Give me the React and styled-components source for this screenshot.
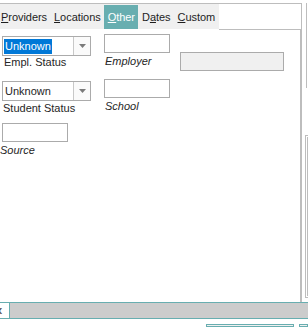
import React from "react";
import styled, { createGlobalStyle } from "styled-components";

const Global = createGlobalStyle`
  html, body { margin: 0; padding: 0; background: #ffffff; }
  body { font-family: "Liberation Sans", Arial, sans-serif; font-size: 11px; color: #1e1e1e; }
  * { box-sizing: border-box; }
`;

const GRAY = "#bdbdbd";
const TEAL = "#68aeb0";

const Page = styled.div`
  width: 308px;
  height: 327px;
  overflow: hidden;
  display: flex;
  flex-direction: column;
  background: #fff;
`;

const Upper = styled.div`
  margin-top: 3px;
  height: 299px;
  display: flex;
`;

const Tabs = styled.div`
  width: 302px;
  border-top: 1px solid ${GRAY};
  border-right: 1px solid ${GRAY};
  display: flex;
  flex-direction: column;
`;

const TabHeader = styled.div`
  height: 26px;
  display: flex;
  align-items: flex-start;
`;

const TabStrip = styled.div`
  margin-left: -2.5px;
  height: 25px;
  padding-top: 1px;
  background: #f0f0f0;
  display: flex;
`;

const Tab = styled.div`
  height: 24px;
  line-height: 24px;
  padding: 0 3.5px;
  letter-spacing: -0.05px;
  white-space: nowrap;
  background: ${(p) => (p.$active ? TEAL : "transparent")};
  color: ${(p) => (p.$active ? "#ffffff" : "#1e1e1e")};
`;

const HeaderFill = styled.div`
  flex: 1;
  height: 26px;
  border-bottom: 1px solid ${GRAY};
`;

const Panel = styled.div`
  width: 301px;
  flex: 1;
  border-right: 1px solid ${GRAY};
  display: flex;
  flex-direction: column;
`;

const Row = styled.div`
  height: ${(p) => p.$h}px;
  display: flex;
  align-items: flex-start;
`;

const Field = styled.div`
  margin-left: ${(p) => p.$ml || 0}px;
  margin-top: ${(p) => p.$mt || 0}px;
  display: flex;
  flex-direction: column;
`;

const Combo = styled.div`
  width: 89px;
  height: 20px;
  border: 1px solid #ababab;
  background: #fff;
  display: flex;
`;

const ComboText = styled.div`
  flex: 1;
  padding: 1px 0 0 1px;
  display: flex;
  align-items: center;
`;

const ComboValue = styled.span`
  line-height: 15px;
  padding: 0 1px;
  background: ${(p) => (p.$selected ? "#0078d7" : "transparent")};
  color: ${(p) => (p.$selected ? "#ffffff" : "#1e1e1e")};
`;

const DropButton = styled.div`
  width: 17px;
  border-left: 1px solid #c8c8c8;
  background: #fafafa;
  display: flex;
  align-items: center;
  justify-content: center;
`;

const TextBox = styled.div`
  width: ${(p) => p.$w}px;
  height: 19px;
  border: 1px solid #ababab;
  background: ${(p) => (p.$disabled ? "#f0f0f0" : "#ffffff")};
`;

const Label = styled.div`
  line-height: 13px;
  margin-top: ${(p) => p.$mt || 0}px;
  margin-left: ${(p) => p.$ml || 0}px;
  white-space: nowrap;
  font-style: ${(p) => (p.$italic ? "italic" : "normal")};
  color: #262626;
`;

const SideRail = styled.div`
  width: 6px;
  display: flex;
  flex-direction: column;
`;

const RailLine = styled.div`
  margin-left: 4px;
  height: 85px;
  border-left: 1px solid ${GRAY};
`;

const RailBox = styled.div`
  margin-left: 3px;
  margin-top: 47px;
  height: 163px;
  border: 1px solid ${GRAY};
  border-right: none;
  padding: 1px 0 1px 1px;
  display: flex;
`;

const RailInner = styled.div`
  flex: 1;
  border: 1px solid ${GRAY};
  border-right: none;
`;

const StatusBar = styled.div`
  height: 17px;
  border-top: 1px solid ${TEAL};
  border-bottom: 1px solid ${TEAL};
  background: #cccccc;
  display: flex;
`;

const StatusCell = styled.div`
  width: 10px;
  background: #ffffff;
  border-right: 1px solid ${TEAL};
  overflow: hidden;
  line-height: 15px;
  font-weight: bold;
  color: #555;
`;

const CellGlyph = styled.span`
  margin-left: -4px;
`;

const ButtonRow = styled.div`
  margin-top: 5px;
  display: flex;
  flex: 1;
`;

const Button = styled.div`
  margin-left: ${(p) => p.$ml}px;
  width: ${(p) => (p.$w ? `${p.$w}px` : "auto")};
  flex: ${(p) => (p.$w ? "none" : 1)};
  border: 1px solid ${TEAL};
  background: #f0f0f0;
`;

const Arrow = () => (
  <svg width="7" height="4" viewBox="0 0 7 4">
    <path d="M0 0 H7 L3.5 4 Z" fill="#7a7a7a" />
  </svg>
);

export default function App() {
  return (
    <Page>
      <Global />
      <Upper>
        <Tabs>
          <TabHeader>
            <TabStrip>
              <Tab><u>P</u>roviders</Tab>
              <Tab><u>L</u>ocations</Tab>
              <Tab $active><u>O</u>ther</Tab>
              <Tab>D<u>a</u>tes</Tab>
              <Tab><u>C</u>ustom</Tab>
            </TabStrip>
            <HeaderFill />
          </TabHeader>
          <Panel>
            <Row $h={47}>
              <Field $ml={2} $mt={6}>
                <Combo>
                  <ComboText><ComboValue $selected>Unknown</ComboValue></ComboText>
                  <DropButton><Arrow /></DropButton>
                </Combo>
                <Label $ml={2}>Empl. Status</Label>
              </Field>
              <Field $ml={13} $mt={4}>
                <TextBox $w={66} />
                <Label $italic $mt={2} $ml={1}>Employer</Label>
              </Field>
              <Field $ml={10} $mt={22}>
                <TextBox $w={104} $disabled />
              </Field>
            </Row>
            <Row $h={43}>
              <Field $ml={2} $mt={4}>
                <Combo>
                  <ComboText><ComboValue>Unknown</ComboValue></ComboText>
                  <DropButton><Arrow /></DropButton>
                </Combo>
                <Label $ml={1} $mt={1}>Student Status</Label>
              </Field>
              <Field $ml={13} $mt={2}>
                <TextBox $w={66} />
                <Label $italic $mt={2} $ml={1}>School</Label>
              </Field>
            </Row>
            <Row $h={60}>
              <Field $ml={2} $mt={3}>
                <TextBox $w={66} />
                <Label $italic $mt={2} $ml={-2}>Source</Label>
              </Field>
            </Row>
          </Panel>
        </Tabs>
        <SideRail>
          <RailLine />
          <RailBox><RailInner /></RailBox>
        </SideRail>
      </Upper>
      <StatusBar>
        <StatusCell><CellGlyph>x</CellGlyph></StatusCell>
      </StatusBar>
      <ButtonRow>
        <Button $ml={206} $w={88} />
        <Button $ml={5} />
      </ButtonRow>
    </Page>
  );
}
